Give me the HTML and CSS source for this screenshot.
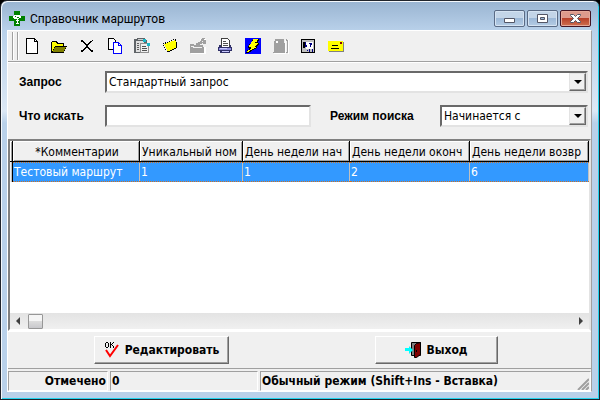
FILE: index.html
```html
<!DOCTYPE html>
<html lang="ru">
<head>
    <meta charset="UTF-8">
    <meta name="viewport" content="width=device-width, initial-scale=1.0">
    <title>Справочник маршрутов</title>
    <link rel="stylesheet" href="styles.css">
</head>
<body>
    <div class="window">
        <header class="titlebar">
            <svg class="app-icon" width="16" height="16" viewBox="0 0 16 16" shape-rendering="crispEdges">
                <path fill="#008000" d="M5 0h6v5h5v5h-5v5H5v-5H0V5h5z"/>
                <path fill="#fff" d="M5 4h6v1h1v2h-2v1H9v4h1v1H7v-1h1V8H5V7H4V5h1z"/>
                <path fill="#fff" d="M7 9h3v1H7z"/>
                <path fill="#008000" d="M6 5h1v1H6zM8 6h2v1H8z"/>
            </svg>
            <h1>Справочник маршрутов</h1>
            <div class="caption-buttons">
                <button type="button" aria-label="Свернуть">
                    <svg width="13" height="11" viewBox="0 0 13 11">
                        <path fill="#fff" stroke="#535666" d="M1.500 5.500h10v4h-10z"/>
                    </svg>
                </button>
                <button type="button" aria-label="Развернуть">
                    <svg width="13" height="11" viewBox="0 0 13 11">
                        <path fill="#fff" stroke="#535666" d="M1.500 1.500h10v8h-10z"/>
                        <path fill="#9db9d8" stroke="#535666" d="M4.500 4.500h4v2h-4z"/>
                    </svg>
                </button>
                <button type="button" class="close" aria-label="Закрыть">
                    <svg width="13" height="11" viewBox="0 0 13 11">
                        <path fill="#fff" stroke="#535666" d="M1.500 1.500h3l2 2 2-2h3v1l-3 3 3 3v1h-3l-2-2-2 2h-3v-1l3-3-3-3z"/>
                    </svg>
                </button>
            </div>
        </header>

        <main class="client">
            <div class="toolbar">
                <div class="grip"></div>
                <div class="tools">
                    <button type="button" aria-label="Создать">
                        <svg viewBox="0 0 16 16"><path fill="#fff" stroke="#000" d="M2.500.5h8l3 3v12h-11z"/><path fill="none" stroke="#000" d="M10.500.5v3h3"/></svg>
                    </button>
                    <button type="button" aria-label="Открыть">
                        <svg viewBox="0 0 16 16"><path fill="#000" d="M1 3h5v1h1v1h6v3h3v1h-1v2h-1v2h-1v2H0V4h1z"/><path fill="#ff0" d="M1 4h4v1h1v1h6v2H4v1H3v2H2v2H1z"/><path fill="#808000" d="M4 9h11v1h-1v2h-1v2H2v-2h1v-2h1z"/></svg>
                    </button>
                    <button type="button" aria-label="Удалить">
                        <svg viewBox="0 0 16 16"><path fill="#000" d="M2 2h2v1h1v1h1v1h1v1h2V5h1V4h1V3h2V2h1v1h-1v1h-1v1h-1v1h-1v1H9v2h1v1h1v1h1v1h2v2h-2v-1h-1v-1h-1v-1H9v-1H7v1H6v1H5v1H4v1H2v-2h2v-1h1v-1h1V9h1V7H6V6H5V5H4V4H2z"/></svg>
                    </button>
                    <button type="button" aria-label="Копировать">
                        <svg viewBox="0 0 16 16"><path fill="#fff" stroke="#000" d="M1.500.5h5l2 2v9h-7z"/><path fill="#fff" stroke="#00f" d="M6.500 4.500h5l3 3v8h-8z"/><path fill="none" stroke="#00f" d="M11.500 4.500v3h3"/></svg>
                    </button>
                    <button type="button" aria-label="Вставить">
                        <svg viewBox="0 0 16 16"><path fill="#606468" d="M0 1h3V0h8v2h2v13H0z"/><path fill="#e0e0e0" d="M2 3h8v11H2z"/><path fill="#606060" d="M3 5h2v1H3zM3 7h2v1H3zM3 9h2v1H3zM3 11h2v1H3z"/><path fill="#d0d0d0" d="M4 1h5v1H4z"/><path fill="#1cb8c8" d="M9 1h3v3H9zM13 5h3v3h-3z"/><path fill="#f0f0f0" stroke="#909090" d="M6.500 5.500h6l2 2v7h-8z"/><path fill="#505050" d="M8 8h4v1H8zM8 10h5v1H8zM8 12h5v1H8z"/><path fill="#1cb8c8" d="M13 5h3v3h-3z"/></svg>
                    </button>
                    <button type="button" aria-label="Пометить">
                        <svg viewBox="0 0 16 16"><path fill="#ff0" d="M2 6h2V5h2V4h3V3h3V2h2v2h1v6h-3v1h-2v1H8v1H5v-2H4V9H3V7H2z"/><path fill="#000" d="M1 5h1v1H1zM3 4h1v2H3zM5 4h1v1H5zM7 3h1v1H7zM9 2h1v1H9zM11 1h1v1h-1zM13 1h1v2h-1zM14 4h1v6h-1zM1 7h1v1H1zM2 9h1v1H2zM3 11h1v1H3zM5 13h3v1H5zM8 12h2v1H8zM10 11h2v1h-2zM12 10h2v1h-2z"/></svg>
                    </button>
                    <button type="button" aria-label="Извлечь" disabled>
                        <svg viewBox="0 0 16 16"><path fill="#fff" d="M1 8h4v1h11v7H1zM10 1h6v5h-3z"/><path fill="#a0a0a0" d="M0 6h4v1h2V5h2V4h2V3h1V1h1V0h3v1h-1v1h2v4h-3V5h-1v1h-2v1h3v2h1v6H0z"/><path fill="#f0f0f0" d="M1 8h3v1h8v1H3V9H1zM12 3h1v1h-1z"/></svg>
                    </button>
                    <button type="button" aria-label="Печать">
                        <svg viewBox="0 0 16 16"><path fill="#fff" stroke="#404040" d="M4.500.5h6l2 2v7h-8z"/><path fill="#505050" d="M6 3h3v1H6zM6 5h5v1H6zM6 7h5v1H6z"/><path fill="#303068" d="M2 7h2v2h9V7h1v2h1v4h-2v2H3v-2H1V9h1z"/><path fill="#9090e0" d="M2 10h12v2H2z"/><path fill="#c8c8ff" d="M3 10h7v1H3zM5 13h7v1H5z"/></svg>
                    </button>
                    <button type="button" aria-label="Выполнить">
                        <svg viewBox="0 0 16 16"><path fill="#00f" d="M0 0h16v16H0z"/><path fill="#000" d="M8 1h6v2h-1v2h1v2h-1v1h-1v2h-1v1H9v1H7v1H6v1H4v1H1v-1h1v-2h2v-2H3V8h1V6h2V4h1V2h1z"/><path fill="#ff0" d="M8 1h5v1h-1v2h-2v1h3v1h-1v1h-1v1h-1v1h1v1H9v1H7v1H5v1H4v1H2v-1h1v-1h2v-1h1V9H4V7h1V6h1V4h1V3h1z"/></svg>
                    </button>
                    <button type="button" aria-label="Сохранить" disabled>
                        <svg viewBox="0 0 16 16"><path fill="#a0a0a0" d="M2 1h9v4h1v10H0v-1h1V3h1zM13 1h1v1h1v13h-2v-1h1V3h-1z"/><path fill="#fff" d="M3 3h2v2H3zM12 2h1v13h-1zM15 2h1v14h-1zM1 15h12v1H1z"/></svg>
                    </button>
                    <button type="button" aria-label="Справка">
                        <svg viewBox="0 0 16 16"><path fill="#000" d="M1 1h14v14H1z"/><path fill="#c0c0c0" d="M2 2h12v12H2z"/><path fill="#fff" d="M6 4h7v7H6z"/><path fill="#000" d="M3 4h2v6H3z"/><path fill="#000080" d="M5 4h1v3h1v2H5zM9 5h3v2h-1v2h-1V6H9zM7 12h1v1H7zM9 11h1v3H9zM12 11h1v3h-1z"/></svg>
                    </button>
                    <button type="button" aria-label="Отправить">
                        <svg viewBox="0 0 16 16"><path fill="#808080" d="M1 4h15v10H1z"/><path fill="#ff0" d="M0 3h15v10H0z"/><path fill="#800000" d="M12 4h2v2h-2z"/><path fill="#000" d="M4 7h6v1H4zM3 10h8v1H3z"/></svg>
                    </button>
                </div>
            </div>

            <form class="query">
                <label for="query">Запрос</label>
                <div class="combo wide">
                    <select id="query"><option>Стандартный запрос</option></select>
                    <span class="drop"></span>
                </div>
                <label for="term">Что искать</label>
                <input type="text" id="term">
                <label for="mode" class="mode-label">Режим поиска</label>
                <div class="combo">
                    <select id="mode"><option>Начинается с</option></select>
                    <span class="drop"></span>
                </div>
            </form>

            <div class="grid">
                <table>
                    <colgroup>
                        <col class="c-mark"><col class="c-comment"><col class="c-id"><col class="c-start"><col class="c-end"><col class="c-back"><col>
                    </colgroup>
                    <thead>
                        <tr>
                            <th></th>
                            <th class="center">*Комментарии</th>
                            <th>Уникальный ном</th>
                            <th>День недели нач</th>
                            <th>День недели оконч</th>
                            <th>День недели возвр</th>
                            <th></th>
                        </tr>
                    </thead>
                    <tbody>
                        <tr>
                            <td></td>
                            <td>Тестовый маршрут</td>
                            <td>1</td>
                            <td>1</td>
                            <td>2</td>
                            <td>6</td>
                            <td></td>
                        </tr>
                    </tbody>
                </table>
                <div class="scrollbar">
                    <svg width="4" height="8" viewBox="0 0 4 8"><path fill="#404040" d="M4 0v8L0 4z"/></svg>
                    <span class="thumb"></span>
                    <svg width="4" height="8" viewBox="0 0 4 8"><path fill="#404040" d="M0 0v8l4-4z"/></svg>
                </div>
            </div>

            <div class="actions">
                <button type="button" class="edit">
                    <svg width="16" height="16" viewBox="0 0 16 16">
                        <path fill="#000" d="M2 0h2v1H2zM1 1h1v4H1zM4 1h1v4H4zM2 5h2v1H2zM6 0h1v6H6zM9 0h1v1H9zM8 1h1v1H8zM7 2h1v1H7zM8 3h1v1H8zM9 4h1v2H9z"/>
                        <path fill="none" stroke="#f00" stroke-width="2" d="M2 8l4 6 8-11"/>
                    </svg>
                    Редактировать
                </button>
                <button type="button" class="exit">
                    <svg width="16" height="16" viewBox="0 0 16 16">
                        <path fill="#808080" stroke="#000" d="M6.500.5h9v13h-9z"/>
                        <path fill="#800000" stroke="#000" d="M9.500 3.500l2-2 4-1v12l-4 3h-2z"/>
                        <path fill="#0ff" d="M0 6h4V4l4 4-4 4V9H0z"/>
                        <path fill="#000" d="M11 8h1v2h-1z"/>
                    </svg>
                    Выход
                </button>
            </div>

            <footer class="status">
                <div class="marked">Отмечено</div>
                <div class="count">0</div>
                <div class="hint">Обычный режим (Shift+Ins - Вставка)
                    <svg width="12" height="12" viewBox="0 0 12 12">
                        <path stroke="#a0a0a0" stroke-width="2" d="M1 12L12 1M5 12l7-7M9 12l3-3"/>
                    </svg>
                </div>
            </footer>
        </main>
    </div>
</body>
</html>
```
FILE: styles.css
```css
* {
    box-sizing: border-box;
}

body {
    margin: 0;
    background-color: #000;
    color: #000;
    font-family: "DejaVu Sans Condensed", "Noto Sans", sans-serif;
    font-size: 12px;
}

button, input, select {
    font: inherit;
    color: inherit;
    border-radius: 0;
    margin: 0;
}

.window {
    display: flex;
    flex-direction: column;
    min-height: 100vh;
    padding: 0 7px 7px 6px;
    border: 1px solid #20242c;
    border-radius: 7px 7px 0 0;
    background: linear-gradient(#99b4d1, #b9d1ea 30px, #dce8f5 110px, #b9d1ea 122px);
    box-shadow: inset 1px 1px 0 #f4f8fc, inset -1px -1px 0 #22d3ee;
}

/* Title bar */
.titlebar {
    display: flex;
    align-items: center;
    height: 29px;
    padding: 6px 1px 0 2px;
}

.titlebar h1 {
    flex: 1;
    margin: 0 0 0 5px;
    font-family: Roboto, "Open Sans", sans-serif;
    font-size: 12px;
    font-weight: normal;
}

.caption-buttons {
    display: flex;
    gap: 2px;
}

.caption-buttons button {
    display: flex;
    align-items: center;
    justify-content: center;
    width: 31px;
    height: 17px;
    padding: 0;
    border: 1px solid #5a6b85;
    border-radius: 2px;
    background: linear-gradient(#c3d5e8 45%, #9db9d8 50%, #b5cce4);
    box-shadow: inset 0 0 0 1px #d5e3f2;
}

.caption-buttons .close {
    border-color: #431422;
    background: linear-gradient(#dd9a8c 45%, #b8412a 50%, #cf7050);
    box-shadow: inset 0 0 0 1px #e5a898;
}

/* Client area */
.client {
    flex: 1;
    display: flex;
    flex-direction: column;
    border: 1px solid #fff;
    border-right-color: #a0a0a0;
    background-color: #f0f0f0;
}

.toolbar {
    display: flex;
    align-items: center;
    height: 31px;
    padding-left: 4px;
    border-bottom: 1px solid #a0a0a0;
    box-shadow: 0 1px 0 #fff;
}

.grip {
    width: 6px;
    height: 28px;
    border: solid #a0a0a0;
    border-width: 0 1px;
    box-shadow: inset 1px 0 0 #fff, 1px 0 0 #fff;
}

.tools {
    display: grid;
    grid-template-columns: repeat(12, 1fr);
    width: 332px;
}

.tools button {
    display: flex;
    justify-content: center;
    padding: 0;
    border: none;
    background: none;
}

.tools svg {
    width: 16px;
    height: 16px;
    shape-rendering: crispEdges;
}

/* Query form */
.query {
    display: grid;
    grid-template-columns: 86px 206px 1fr 148px;
    row-gap: 12px;
    align-items: center;
    padding: 9px 3px 12px 11px;
}

.query label {
    font-family: "Liberation Sans", Arial, sans-serif;
    font-size: 12px;
    font-weight: bold;
}

.mode-label {
    padding-left: 19px;
}

.query input, .combo {
    height: 22px;
    border: 2px solid;
    border-color: #696969 #e3e3e3 #e3e3e3 #696969;
    background-color: #fff;
}

.combo {
    display: flex;
}

.wide {
    grid-column: 2 / -1;
}

.combo select {
    flex: 1;
    appearance: none;
    min-width: 0;
    padding: 0 2px;
    border: none;
    background: none;
}

.drop {
    display: flex;
    align-items: center;
    justify-content: center;
    width: 17px;
    border: 1px solid;
    border-color: #e3e3e3 #696969 #696969 #e3e3e3;
    background-color: #f0f0f0;
    box-shadow: inset -1px -1px 0 #a0a0a0;
    pointer-events: none;
}

.drop::after {
    content: "";
    border: 4px solid transparent;
    border-top-color: #000;
    border-bottom: none;
}

/* Data grid */
.grid {
    flex: 1;
    display: flex;
    flex-direction: column;
    justify-content: space-between;
    border: 2px solid;
    border-color: #808080 #e3e3e3 #fff #808080;
    background-color: #fff;
}

table {
    width: 100%;
    table-layout: fixed;
    border-collapse: separate;
    border-spacing: 0;
}

.c-mark { width: 3px; }
.c-comment { width: 127px; }
.c-id { width: 103px; }
.c-start { width: 107px; }
.c-end { width: 120px; }
.c-back { width: 119px; }

th, td {
    overflow: hidden;
    white-space: nowrap;
    text-align: left;
    font-weight: normal;
    line-height: 18px;
}

th {
    height: 21px;
    padding: 1px 0 0 2px;
    border-right: 1px solid #000;
    border-bottom: 1px solid #000;
    background-color: #f0f0f0;
    box-shadow: inset 1px 1px 0 #fff, inset -1px -1px 0 #a0a0a0;
}

th:first-child, td:first-child {
    padding: 0;
}

th.center {
    text-align: center;
}

th:last-child, td:last-child {
    border-right: none;
    padding: 0;
}

td {
    height: 20px;
    padding: 0 1px;
    border: dotted #d07020;
    border-width: 1px 0;
    background-color: #3399ff;
    color: #fff;
    box-shadow: inset -1px 0 0 #c0c0c0;
}

td:first-child {
    border: none;
    border-right: 1px solid #000;
    background-color: #f0f0f0;
}

.scrollbar {
    display: flex;
    align-items: center;
    height: 16px;
    padding: 0 6px;
    background: linear-gradient(#e3e3e3, #f0f0f0);
}

.thumb {
    width: 15px;
    height: 15px;
    margin: 0 auto 0 8px;
    border: 1px solid #979797;
    border-radius: 1px;
    background: linear-gradient(#f5f5f5 45%, #dcdcdc 50%, #c8c8cc);
}

/* Buttons */
.actions {
    display: flex;
    justify-content: space-between;
    padding: 4px 93px 4px 86px;
    border-top: 1px solid #fff;
    border-bottom: 1px solid #a0a0a0;
}

.actions button {
    display: flex;
    align-items: center;
    justify-content: center;
    gap: 5px;
    height: 28px;
    padding: 0;
    border: 1px solid;
    border-color: #fff #696969 #696969 #fff;
    background-color: #f0f0f0;
    box-shadow: inset -1px -1px 0 #a0a0a0;
    font-weight: bold;
}

.edit {
    width: 135px;
}

.exit {
    width: 123px;
}

/* Status bar */
.status {
    display: grid;
    grid-template-columns: 100px 148px 1fr;
    gap: 2px;
    padding-top: 2px;
    font-weight: bold;
    line-height: 18px;
}

.status div {
    padding: 0 1px;
    border: 1px solid;
    border-color: #a0a0a0 #fff #fff #a0a0a0;
}

.marked {
    text-align: right;
}

.hint {
    display: flex;
    justify-content: space-between;
    align-items: flex-end;
}
```
